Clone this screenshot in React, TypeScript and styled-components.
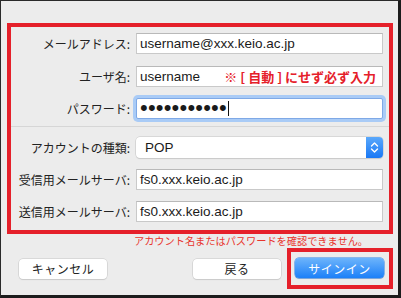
import React from 'react';
import styled, { createGlobalStyle } from 'styled-components';

const GlobalStyle = createGlobalStyle`
  html, body {
    margin: 0;
    padding: 0;
    background: #ececec;
  }
  body {
    font-family: "Liberation Sans", "Noto Sans CJK JP", sans-serif;
  }
`;

const RED = '#e5202a';

const Window = styled.div`
  width: 401px;
  height: 298px;
  box-sizing: border-box;
  background: #ececec;
  border-top: 1px solid #2a2a2a;
  border-left: 1px solid #2a2a2a;
  border-right: 3px solid #1c1c1c;
  border-bottom: 3px solid #1c1c1c;
  padding: 22px 5px 0 6px;
`;

const Highlight = styled.div`
  border: 4px solid ${RED};
`;

const FormBox = styled(Highlight)`
  height: 211px;
  box-sizing: border-box;
  padding: 6px 6px 0 0;
  display: flex;
  flex-direction: column;
`;

const Row = styled.div<{ $top?: number }>`
  display: grid;
  grid-template-columns: 119px 247px;
  column-gap: 6px;
  align-items: center;
  height: 21px;
  margin-top: ${(p) => p.$top ?? 0}px;
`;

const Label = styled.label`
  text-align: right;
  font-family: "Noto Sans CJK JP", sans-serif;
  font-size: 12px;
  color: #222;
  white-space: nowrap;
  line-height: 21px;
`;

const Field = styled.div<{ $focused?: boolean }>`
  height: 21px;
  box-sizing: border-box;
  background: #fff;
  border: 1px solid ${(p) => (p.$focused ? '#7fa9e6' : '#c9c9c9')};
  border-top-color: ${(p) => (p.$focused ? '#7fa9e6' : '#b9b9b9')};
  box-shadow: ${(p) => (p.$focused ? '0 0 0 3px #a9cbf6' : 'none')};
  border-radius: ${(p) => (p.$focused ? '2px' : '0')};
  display: flex;
  align-items: center;
  padding: 0 6px 0 3px;
  font-size: 13.5px;
  color: #1a1a1a;
  white-space: nowrap;
`;

const Note = styled.span`
  margin-left: auto;
  font-family: "Noto Sans CJK JP", sans-serif;
  font-weight: 700;
  font-size: 13px;
  color: ${RED};
`;

const Dots = styled.span`
  font-size: 22px;
  line-height: 1;
  letter-spacing: 0.2px;
  position: relative;
  top: -1px;
`;

const Caret = styled.span`
  width: 1px;
  height: 15px;
  background: #111;
  margin-left: 1px;
`;

const Separator = styled.div`
  height: 1px;
  background: #d6d6d6;
  margin: 7px -6px 0 0;
`;

const Select = styled.div`
  height: 21px;
  box-sizing: border-box;
  background: #fff;
  border-radius: 4px;
  box-shadow: 0 0 0 0.5px #c4c4c4, 0 1px 1px rgba(0, 0, 0, 0.12);
  display: flex;
  align-items: center;
  padding-left: 9px;
  font-size: 13.5px;
  color: #1a1a1a;
`;

const Stepper = styled.span`
  margin-left: auto;
  width: 17px;
  height: 21px;
  border-radius: 0 4px 4px 0;
  background: linear-gradient(#5aa8fb, #1978f5);
  display: flex;
  align-items: center;
  justify-content: center;
`;

const ErrorText = styled.div`
  font-family: "Noto Sans CJK JP", sans-serif;
  font-size: 10.2px;
  line-height: 14px;
  color: #e8352e;
  padding-left: 127px;
  white-space: nowrap;
`;

const ButtonRow = styled.div`
  display: flex;
  align-items: center;
  padding-left: 12px;
`;

const Button = styled.button<{ $primary?: boolean }>`
  width: ${(p) => (p.$primary ? 89 : 88)}px;
  height: 20px;
  border: none;
  border-radius: 4px;
  padding: 0;
  font-family: "Noto Sans CJK JP", sans-serif;
  font-size: 12px;
  color: ${(p) => (p.$primary ? '#fff' : '#222')};
  background: ${(p) => (p.$primary ? 'linear-gradient(#6db4fb, #1c80f8)' : '#fff')};
  box-shadow: ${(p) =>
    p.$primary
      ? '0 0 0 0.5px #2a7fe6, 0 1px 1px rgba(0,0,0,0.15)'
      : '0 0 0 0.5px #c6c6c6, 0 1px 1px rgba(0,0,0,0.12)'};
  letter-spacing: 0.5px;
`;

const BackButton = styled(Button)`
  margin-left: auto;
`;

const PrimaryBox = styled(Highlight)`
  margin-left: 6px;
  padding: 6px 5px 7px 4px;
`;

const StepperIcon = () => (
  <svg width="9" height="13" viewBox="0 0 9 13">
    <path d="M1.5 5 L4.5 2 L7.5 5 M1.5 8 L4.5 11 L7.5 8" fill="none" stroke="#fff" strokeWidth="1.4" strokeLinecap="round" strokeLinejoin="round" />
  </svg>
);

export default function App() {
  return (
    <>
      <GlobalStyle />
      <Window>
        <FormBox>
          <Row>
            <Label>メールアドレス:</Label>
            <Field>username@xxx.keio.ac.jp</Field>
          </Row>
          <Row $top={12}>
            <Label>ユーザ名:</Label>
            <Field>
              username
              <Note>※ [ 自動 ] にせず必ず入力</Note>
            </Field>
          </Row>
          <Row $top={11}>
            <Label>パスワード:</Label>
            <Field $focused>
              <Dots>•••••••••••</Dots>
              <Caret />
            </Field>
          </Row>
          <Separator />
          <Row $top={10}>
            <Label>アカウントの種類:</Label>
            <Select>
              POP
              <Stepper>
                <StepperIcon />
              </Stepper>
            </Select>
          </Row>
          <Row $top={11}>
            <Label>受信用メールサーバ:</Label>
            <Field>fs0.xxx.keio.ac.jp</Field>
          </Row>
          <Row $top={11}>
            <Label>送信用メールサーバ:</Label>
            <Field>fs0.xxx.keio.ac.jp</Field>
          </Row>
        </FormBox>
        <ErrorText>アカウント名またはパスワードを確認できません。</ErrorText>
        <ButtonRow>
          <Button>キャンセル</Button>
          <BackButton>戻る</BackButton>
          <PrimaryBox>
            <Button $primary>サインイン</Button>
          </PrimaryBox>
        </ButtonRow>
      </Window>
    </>
  );
}
